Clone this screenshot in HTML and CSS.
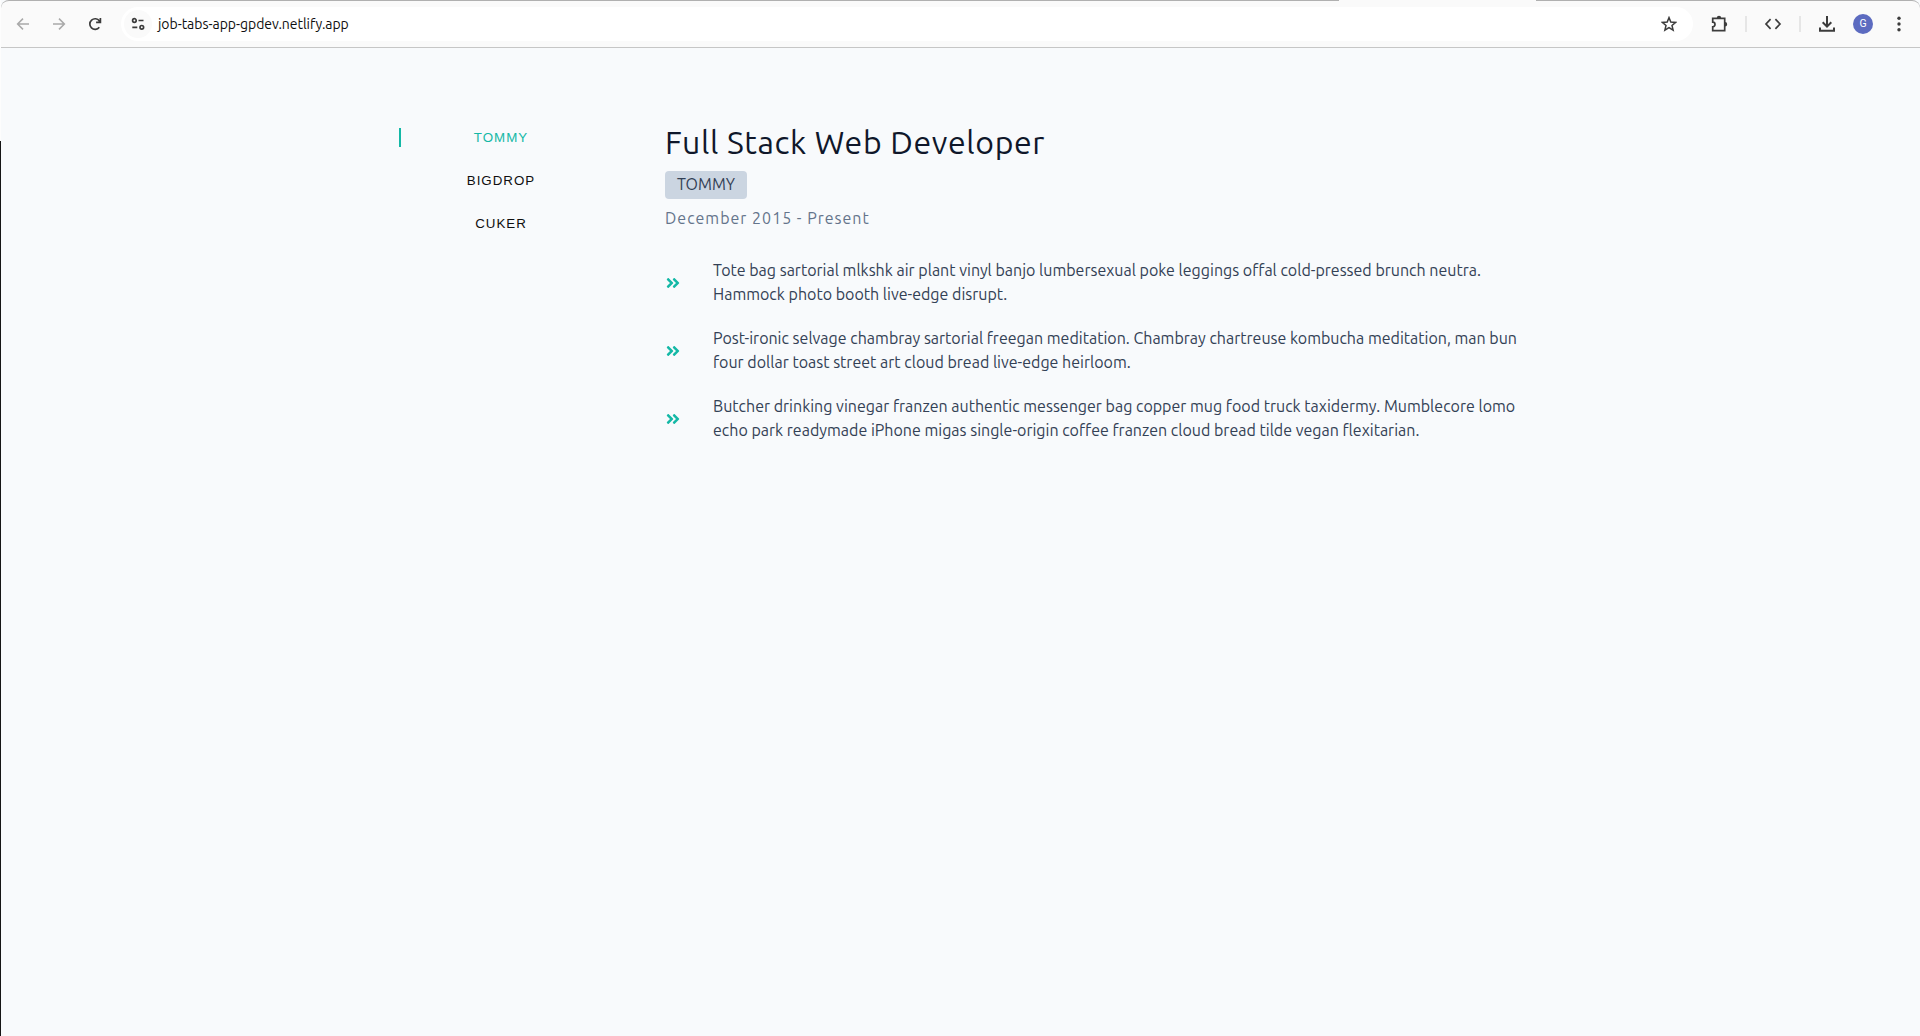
FILE: index.html
```html
<!DOCTYPE html>
<html lang="en">
<head>
<meta charset="utf-8">
<title>Job Tabs</title>
<link rel="stylesheet" href="styles.css">
</head>
<body>
<div class="window">
  <header class="toolbar">
    <nav class="nav-buttons">
      <svg class="icon muted" viewBox="0 0 16 16"><path d="M14 8H2.8M8 2.6 2.6 8 8 13.4"/></svg>
      <svg class="icon muted" viewBox="0 0 16 16"><path d="M2 8h11.2M8 2.6 13.4 8 8 13.4"/></svg>
      <svg class="icon" viewBox="0 0 16 16"><path d="M12.300 11.300A5.300 5.300 0 1 1 12.400 4.900L13.400 6M13.400 2v4.300H9.100"/></svg>
    </nav>
    <div class="omnibox">
      <span class="site-info">
        <svg class="icon" viewBox="0 0 16 16"><circle cx="4.400" cy="4.500" r="1.800"/><path d="M8.500 4.500h5M2.300 11.300h5"/><circle cx="11.800" cy="11.300" r="1.800"/></svg>
      </span>
      <span class="url">job-tabs-app-gpdev.netlify.app</span>
      <svg class="icon star" viewBox="0 0 16 16"><path d="M8 1.600l1.800 4.400 4.800.4-3.600 3.100 1.100 4.600L8 11.600l-4.100 2.500L5 9.500 1.400 6.400 6.200 6z"/></svg>
    </div>
    <div class="actions">
      <svg class="icon puzzle" viewBox="0 0 18 18"><path d="M3.300 3.300h11.400v12.400H2.700v-3.900a2.300 2.300 0 0 0 0-4.600V3.300z"/><path class="solid" d="M6.800 3a2.200 2.200 0 0 1 4.400 0zM15 7a2.200 2.200 0 0 1 0 4.400z"/></svg>
      <span class="divider"></span>
      <svg class="icon code" viewBox="0 0 18 16"><path d="M6.600 3.200 2 8l4.600 4.800M11.400 3.200 16 8l-4.600 4.800"/></svg>
      <span class="divider"></span>
      <svg class="icon download" viewBox="0 0 18 18"><path d="M9 1v10.500M4.700 7.300 9 11.600l4.300-4.300M2 12.500v3.300h14v-3.300"/></svg>
      <span class="avatar">G</span>
      <svg class="dots" viewBox="0 0 4 16"><circle cx="2" cy="2.300" r="1.700"/><circle cx="2" cy="8" r="1.700"/><circle cx="2" cy="13.700" r="1.700"/></svg>
    </div>
    <span class="active-tab"></span>
  </header>
  <main class="jobs">
    <div class="companies">
      <button class="company active" type="button">TOMMY</button>
      <button class="company" type="button">BIGDROP</button>
      <button class="company" type="button">CUKER</button>
    </div>
    <article class="job">
      <h1 class="title">Full Stack Web Developer</h1>
      <span class="tag">TOMMY</span>
      <p class="date">December 2015 - Present</p>
      <ul class="duties">
        <li class="duty">
          <svg class="angles" viewBox="0 0 448 512"><use href="#angles"/></svg>
          <p class="text">Tote bag sartorial mlkshk air plant vinyl banjo lumbersexual poke leggings offal cold-pressed brunch neutra. Hammock photo booth live-edge disrupt.</p>
        </li>
        <li class="duty">
          <svg class="angles" viewBox="0 0 448 512"><use href="#angles"/></svg>
          <p class="text">Post-ironic selvage chambray sartorial freegan meditation. Chambray chartreuse kombucha meditation, man bun four dollar toast street art cloud bread live-edge heirloom.</p>
        </li>
        <li class="duty">
          <svg class="angles" viewBox="0 0 448 512"><use href="#angles"/></svg>
          <p class="text">Butcher drinking vinegar franzen authentic messenger bag copper mug food truck taxidermy. Mumblecore lomo echo park readymade iPhone migas single-origin coffee franzen cloud bread tilde vegan flexitarian.</p>
        </li>
      </ul>
    </article>
  </main>
</div>
<svg class="defs" width="0" height="0"><defs><path id="angles" d="M224.300 273l-136 136c-9.400 9.400-24.600 9.400-33.900 0l-22.600-22.600c-9.400-9.400-9.400-24.600 0-33.900l96.400-96.400-96.400-96.400c-9.400-9.400-9.400-24.600 0-33.900L54.300 103c9.400-9.400 24.600-9.400 33.900 0l136 136c9.500 9.400 9.500 24.600.1 34zm192-34l-136-136c-9.400-9.400-24.600-9.400-33.900 0l-22.600 22.600c-9.400 9.400-9.400 24.600 0 33.900l96.400 96.400-96.400 96.400c-9.400 9.400-9.400 24.600 0 33.900l22.600 22.600c9.400 9.400 24.600 9.400 33.900 0l136-136c9.400-9.200 9.400-24.400 0-33.800z" transform="translate(0 32)"/></defs></svg>
</body>
</html>
```
FILE: styles.css
```css
* { box-sizing: border-box; margin: 0; padding: 0; }

body {
  height: 1036px;
  overflow: hidden;
  background: linear-gradient(#fdfdfd 0 141px, #151515 141px);
  font-family: Ubuntu, "Open Sans", sans-serif;
  font-size: 16px;
  line-height: 24px;
}

.window {
  height: 1036px;
  margin-left: 1px;
  background: #f8fafc;
}

.defs { position: absolute; }

/* Browser toolbar */
.toolbar {
  position: relative;
  display: flex;
  align-items: center;
  height: 48px;
  padding-left: 14px;
  border-top: 1px solid #b0b0b0;
  border-bottom: 1px solid #c6c6c6;
  border-radius: 8px 8px 0 0;
  background: #fafafa;
}

.active-tab {
  position: absolute;
  top: -1px;
  left: 1338px;
  width: 197px;
  height: 1px;
  background: #fafafa;
}

.icon {
  width: 16px;
  height: 16px;
  fill: none;
  stroke: #3c3c3c;
  stroke-width: 1.7;
}

.muted { stroke: #a9a9a9; stroke-width: 1.5; }

.nav-buttons { display: flex; gap: 20px; width: 106px; }

.omnibox {
  display: flex;
  align-items: center;
  width: 1572px;
  height: 34px;
  padding: 0 16px 0 3px;
  border-radius: 17px;
  background: #fff;
}

.site-info {
  display: flex;
  align-items: center;
  justify-content: center;
  width: 28px;
  height: 28px;
  border-radius: 50%;
  background: #fafafa;
}

.url {
  flex: 1;
  padding-left: 6px;
  color: #0f0f0f;
  font-size: 14px;
  letter-spacing: -0.04px;
}

.star { stroke-width: 1.5; }

.actions { display: flex; align-items: center; flex: 1; padding-left: 17px; }
.puzzle { width: 18px; height: 18px; }
.puzzle .solid { fill: #3c3c3c; stroke: none; }
.divider { width: 2px; height: 16px; margin-left: 17px; background: #e6e6e6; }
.code { width: 18px; margin-left: 17px; }
.code + .divider { margin-left: 17px; }
.download { width: 18px; height: 18px; margin-left: 17px; stroke-width: 2; }

.avatar {
  width: 20px;
  height: 20px;
  margin-left: 17px;
  border-radius: 50%;
  background: #5c6bc0;
  color: #fff;
  font: 10.5px/20px Roboto, sans-serif;
  text-align: center;
}

.dots { width: 4px; height: 16px; margin-left: 24px; fill: #3c3c3c; }

/* Job tabs */
.jobs {
  display: grid;
  grid-template-columns: 202px 860px;
  column-gap: 64px;
  padding: 74px 0 0 398px;
}

.companies {
  display: flex;
  flex-direction: column;
  gap: 24px;
  padding-top: 6px;
}

.company {
  height: 19px;
  border: 0;
  border-left: 2px solid transparent;
  background: transparent;
  color: #0f0f0f;
  font: 13.333px/19px "Liberation Sans", Arial, sans-serif;
  letter-spacing: 1px;
}

.company.active { border-color: #14b8a6; color: #14b8a6; }

.title {
  color: #0f172a;
  font-size: 32px;
  font-weight: 400;
  line-height: 40px;
  letter-spacing: 0.64px;
}

.tag {
  display: block;
  width: 82px;
  height: 28px;
  margin-top: 9px;
  border-radius: 4px;
  background: #cbd5e1;
  color: #334155;
  line-height: 27px;
  text-align: center;
}

.date {
  margin-top: 7px;
  color: #64748b;
  letter-spacing: 1px;
}

.duties { margin-top: 28px; list-style: none; }

.duty {
  display: grid;
  grid-template-columns: 16px 1fr;
  align-items: center;
  column-gap: 32px;
  margin-bottom: 20px;
}

.angles { width: 16px; height: 16px; fill: #14b8a6; }
.text { max-width: 812px; color: #334155; }
```
